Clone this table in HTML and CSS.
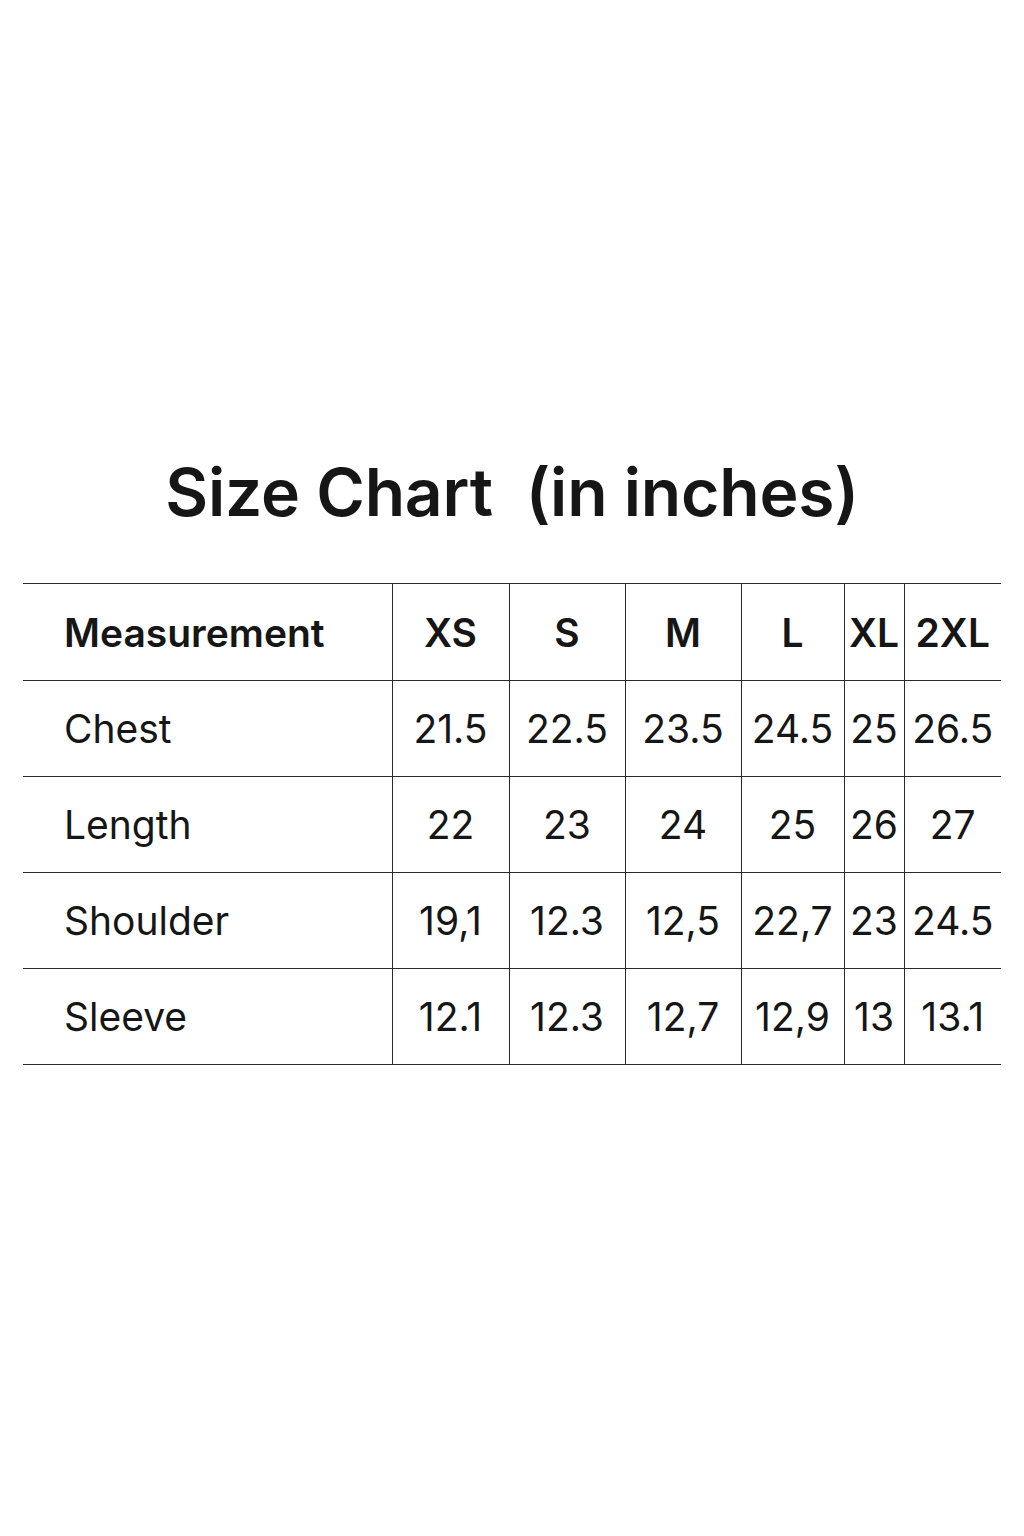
FILE: index.html
```html
<!DOCTYPE html>
<html>
<head>
<meta charset="utf-8">
<link rel="stylesheet" href="styles.css">
</head>
<body>
<main class="page">
  <h1 class="title">Size Chart&nbsp; (in inches)</h1>
  <table class="chart">
    <colgroup>
      <col class="c-label"><col class="c-xs"><col class="c-s"><col class="c-m"><col class="c-l"><col class="c-xl"><col class="c-2xl">
    </colgroup>
    <thead>
      <tr><th class="label">Measurement</th><th>XS</th><th>S</th><th>M</th><th>L</th><th>XL</th><th>2XL</th></tr>
    </thead>
    <tbody>
      <tr><td class="label">Chest</td><td>21.5</td><td>22.5</td><td>23.5</td><td>24.5</td><td>25</td><td>26.5</td></tr>
      <tr><td class="label">Length</td><td>22</td><td>23</td><td>24</td><td>25</td><td>26</td><td>27</td></tr>
      <tr><td class="label">Shoulder</td><td>19,1</td><td>12.3</td><td>12,5</td><td>22,7</td><td>23</td><td>24.5</td></tr>
      <tr><td class="label">Sleeve</td><td>12.1</td><td>12.3</td><td>12,7</td><td>12,9</td><td>13</td><td>13.1</td></tr>
    </tbody>
  </table>
</main>
</body>
</html>
```
FILE: styles.css
```css
html, body {
  margin: 0;
  padding: 0;
  background: #ffffff;
}
body {
  font-family: Inter, "Noto Sans", "Liberation Sans", sans-serif;
  color: #161616;
  width: 1024px;
  height: 1536px;
}
.page {
  padding-top: 452px;
  display: flex;
  flex-direction: column;
  align-items: center;
}
.title {
  margin: 0;
  font-size: 66px;
  font-weight: 600;
  line-height: 80px;
  height: 80px;
  letter-spacing: -0.2px;
}
.chart {
  margin-top: 51px;
  margin-left: 23px;
  align-self: flex-start;
  width: 978px;
  border-collapse: collapse;
  table-layout: fixed;
}
.c-label { width: 369px; }
.c-xs { width: 117px; }
.c-s { width: 116px; }
.c-m { width: 116px; }
.c-l { width: 103px; }
.c-xl { width: 60px; }
.c-2xl { width: 97px; }
.chart th, .chart td {
  height: 95px;
  padding: 0;
  border-top: 1.5px solid #2a2a2a;
  border-bottom: 1.5px solid #2a2a2a;
  border-left: 1.5px solid #2a2a2a;
  text-align: center;
  vertical-align: middle;
  font-size: 39px;
  white-space: nowrap;
}
.chart th {
  height: 96px;
  font-weight: 600;
}
.chart td {
  font-weight: 400;
}
.chart .label {
  border-left: none;
  text-align: left;
  padding-left: 41px;
}
```
